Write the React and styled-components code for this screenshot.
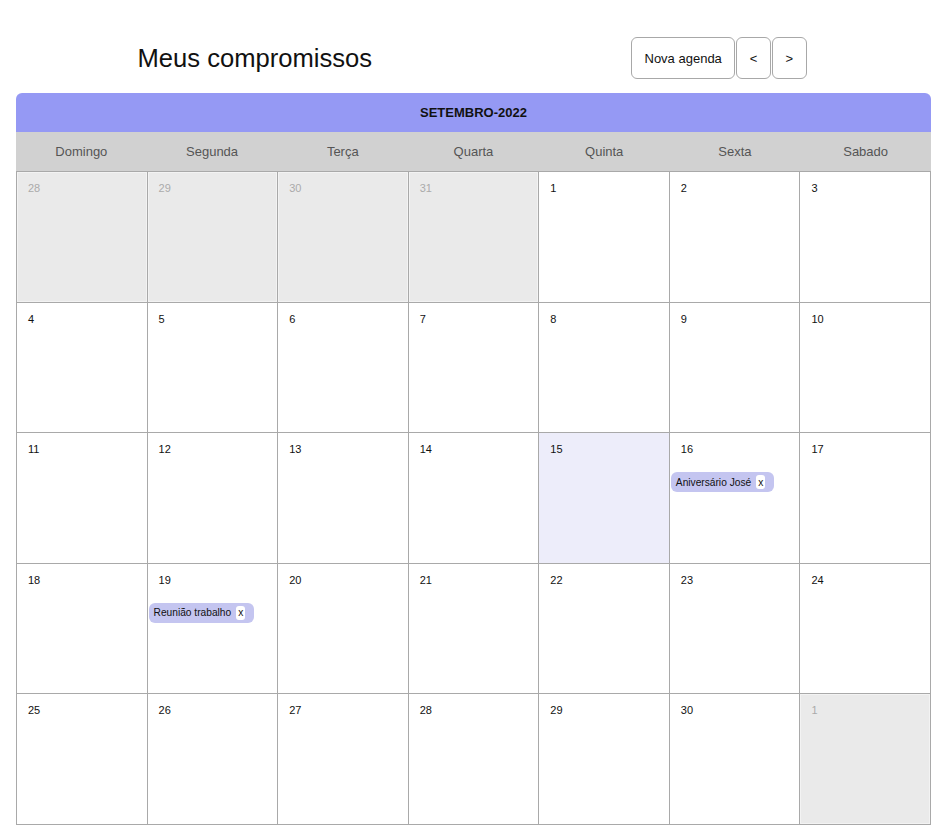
import React from "react";
import styled, { createGlobalStyle } from "styled-components";

const Global = createGlobalStyle`
  html, body { margin: 0; padding: 0; background: #fff; }
  body { font-family: "Liberation Sans", Arial, sans-serif; color: #111; }
`;

const Page = styled.div`
  padding: 37px 8px 0 8px;
`;

const Header = styled.header`
  display: flex;
  justify-content: space-around;
  align-items: center;
  height: 42px;
  margin-bottom: 14px;
`;

const Title = styled.h1`
  margin: 0;
  font-size: 25.6px;
  font-weight: 400;
  color: #111;
`;

const Actions = styled.div`
  display: flex;
  gap: 1px;
`;

const Button = styled.button`
  height: 42px;
  padding: 0 12.5px;
  background: #fff;
  border: 1px solid #a8a8a8;
  border-radius: 6px;
  font-family: "Liberation Sans", Arial, sans-serif;
  font-size: 13px;
  color: #111;
  cursor: pointer;
`;

const Calendar = styled.section`
  margin-left: 8px;
  width: 915px;
`;

const MonthBar = styled.div`
  height: 39px;
  display: flex;
  align-items: center;
  justify-content: center;
  background: #9599f4;
  border-radius: 6px 6px 0 0;
  font-size: 13px;
  font-weight: 700;
  color: #111;
`;

const WeekRow = styled.div`
  display: grid;
  grid-template-columns: repeat(7, 1fr);
  height: 39px;
  background: #d1d1d1;
`;

const WeekDay = styled.div`
  display: flex;
  align-items: center;
  justify-content: center;
  font-size: 13px;
  color: #555;
`;

const Grid = styled.div`
  display: grid;
  grid-template-columns: repeat(7, 1fr);
  grid-auto-rows: 130.5px;
  border-left: 1px solid #a9a9a9;
  border-top: 1px solid #a9a9a9;
`;

const Cell = styled.div`
  box-sizing: border-box;
  border-right: 1px solid #a9a9a9;
  border-bottom: 1px solid #a9a9a9;
  background: ${(p) => (p.$muted ? "#eaeaea" : p.$today ? "#ededfa" : "#fff")};
  box-shadow: ${(p) => (p.$muted ? "inset 0 0 0 1px #f3f3f3" : "none")};
  padding: 10px 0 0 0;
  display: flex;
  flex-direction: column;
  align-items: flex-start;
`;

const DayNum = styled.span`
  display: block;
  margin-left: 11px;
  font-size: 11px;
  line-height: 13px;
  color: ${(p) => (p.$muted ? "#aaa" : "#111")};
`;

const Chip = styled.div`
  margin: 16px 0 0 1px;
  height: 20px;
  display: inline-flex;
  align-items: center;
  gap: 5px;
  padding: 0 9px 0 5px;
  background: #c4c5f0;
  border-radius: 6px;
  font-size: 10.2px;
  color: #111;
`;

const Close = styled.span`
  display: inline-flex;
  align-items: center;
  justify-content: center;
  height: 14px;
  padding: 0 2px;
  background: #fff;
  border-radius: 3px;
  font-size: 10.2px;
`;

const weekdays = ["Domingo", "Segunda", "Terça", "Quarta", "Quinta", "Sexta", "Sabado"];

const days = [
  ...[28, 29, 30, 31].map((d) => ({ d, muted: true })),
  ...Array.from({ length: 30 }, (_, i) => ({ d: i + 1 })),
  { d: 1, muted: true },
];

const events = {
  16: "Aniversário José",
  19: "Reunião trabalho",
};

export default function App() {
  return (
    <>
      <Global />
      <Page>
        <Header>
          <Title>Meus compromissos</Title>
          <Actions>
            <Button>Nova agenda</Button>
            <Button>&lt;</Button>
            <Button>&gt;</Button>
          </Actions>
        </Header>
        <Calendar>
          <MonthBar>SETEMBRO-2022</MonthBar>
          <WeekRow>
            {weekdays.map((w) => (
              <WeekDay key={w}>{w}</WeekDay>
            ))}
          </WeekRow>
          <Grid>
            {days.map((day, i) => (
              <Cell key={i} $muted={day.muted} $today={!day.muted && day.d === 15}>
                <DayNum $muted={day.muted}>{day.d}</DayNum>
                {!day.muted && events[day.d] && (
                  <Chip>
                    {events[day.d]}
                    <Close>x</Close>
                  </Chip>
                )}
              </Cell>
            ))}
          </Grid>
        </Calendar>
      </Page>
    </>
  );
}
